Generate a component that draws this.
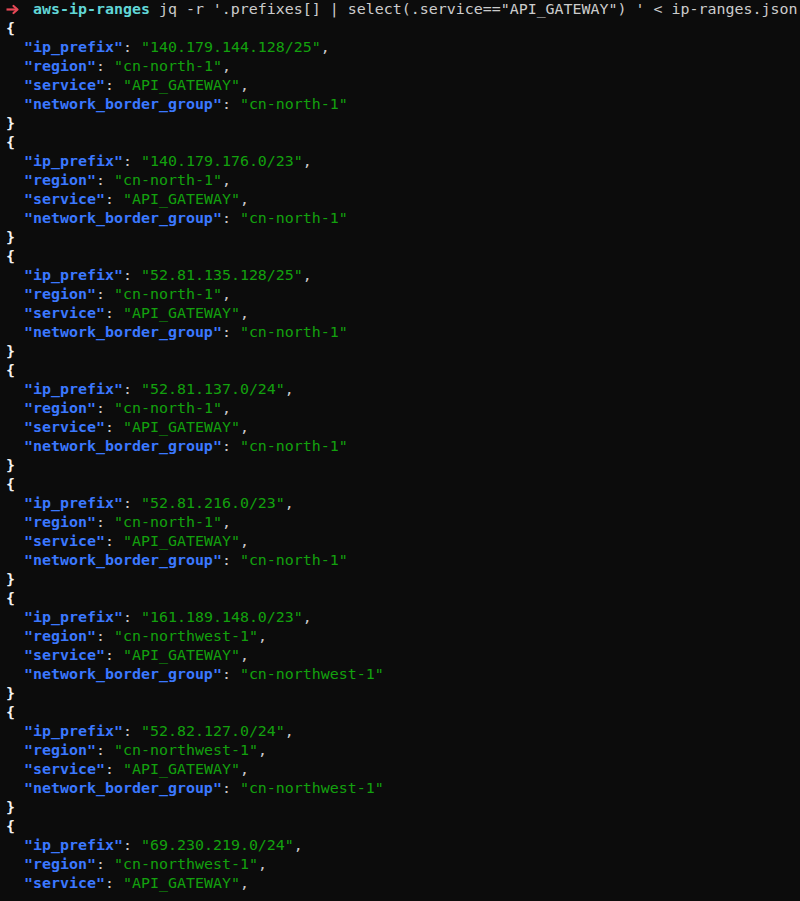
const entries = [
  { ip: "140.179.144.128/25", region: "cn-north-1" },
  { ip: "140.179.176.0/23", region: "cn-north-1" },
  { ip: "52.81.135.128/25", region: "cn-north-1" },
  { ip: "52.81.137.0/24", region: "cn-north-1" },
  { ip: "52.81.216.0/23", region: "cn-north-1" },
  { ip: "161.189.148.0/23", region: "cn-northwest-1" },
  { ip: "52.82.127.0/24", region: "cn-northwest-1" },
];

const Line = ({ children }) => <div className="h-[19px] leading-[19px] whitespace-pre">{children}</div>;

const Field = ({ name, value, last }) => (
  <Line>
    {"  "}
    <span className="font-bold text-[#3b78ff]">"{name}"</span>
    <span>: </span>
    <span className="text-[#13a10e]">"{value}"</span>
    {!last && <span>,</span>}
  </Line>
);

const Brace = ({ ch }) => (
  <Line>
    <span className="font-bold text-[#f2f2f2]">{ch}</span>
  </Line>
);

// zsh prompt arrow
const Arrow = () => (
  <span className="inline-block w-[27px] align-top">
    <svg width="14" height="19" viewBox="0 0 14 19" className="block">
      <path d="M0.5 9.5 H11" stroke="#e74856" strokeWidth="2.2" />
      <path d="M7.5 6 L11.5 9.5 L7.5 13" stroke="#e74856" strokeWidth="2.2" fill="none" strokeLinecap="round" strokeLinejoin="round" />
    </svg>
  </span>
);

export default function App() {
  return (
    <div className="w-[800px] h-[901px] overflow-hidden bg-[#0c0c0c] text-[#cccccc] pl-[6px] text-[14.95px] font-['DejaVu_Sans_Mono',monospace]">
      {/* prompt */}
      <Line>
        <Arrow />
        <span className="font-bold text-[#61d6d6]">aws-ip-ranges</span>
        {" jq -r '.prefixes[] | select(.service==\"API_GATEWAY\") ' < ip-ranges.json"}
      </Line>
      {entries.map((e) => (
        <div key={e.ip}>
          <Brace ch="{" />
          <Field name="ip_prefix" value={e.ip} />
          <Field name="region" value={e.region} />
          <Field name="service" value="API_GATEWAY" />
          <Field name="network_border_group" value={e.region} last />
          <Brace ch="}" />
        </div>
      ))}
      {/* last entry, cut by the window bottom */}
      <Brace ch="{" />
      <Field name="ip_prefix" value="69.230.219.0/24" />
      <Field name="region" value="cn-northwest-1" />
      <Field name="service" value="API_GATEWAY" />
    </div>
  );
}
